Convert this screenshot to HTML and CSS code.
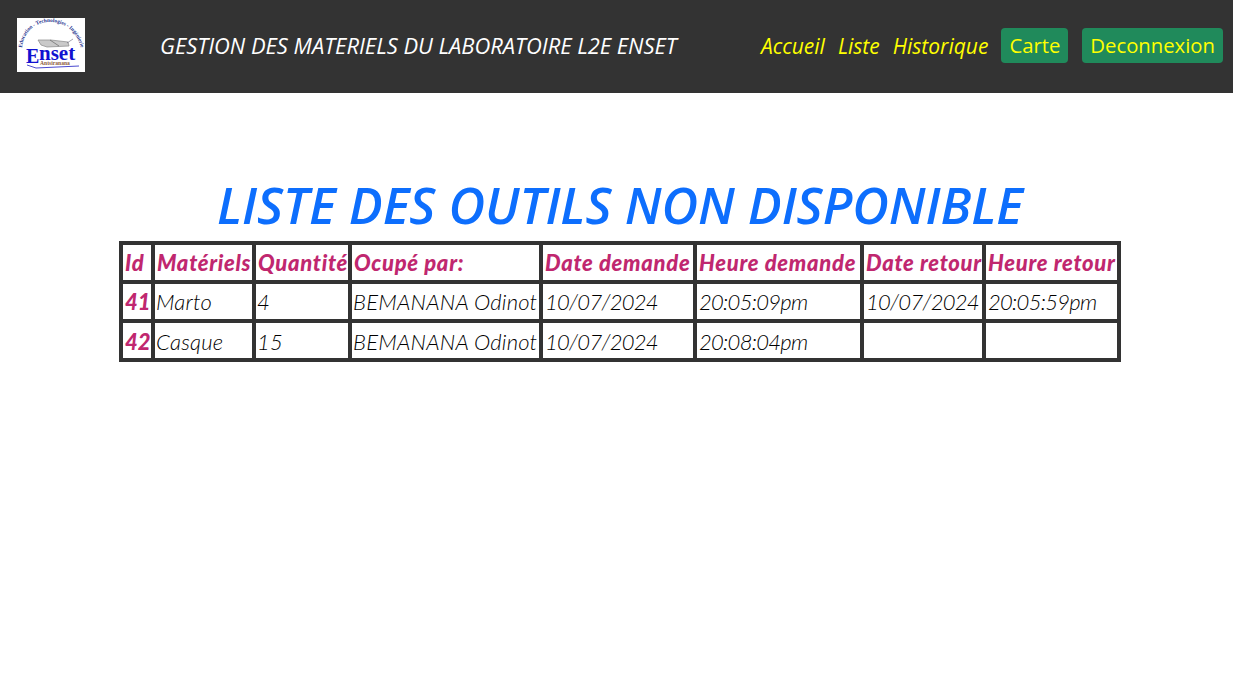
FILE: index.html
```html
<!DOCTYPE html>
<html lang="fr">
<head>
<meta charset="utf-8">
<title>Liste des outils non disponible</title>
<link rel="stylesheet" href="styles.css">
</head>
<body>
<header class="topbar">
  <div class="logo">
    <svg viewBox="0 0 68 54" width="68" height="54" role="img" aria-label="Enset">
      <rect width="68" height="54" fill="#fff"/>
      <defs><path id="arc" d="M5 30 C 7 12 20 4 33 4 C 47 4 60 13 64 30"/></defs>
      <text class="logo-arc"><textPath href="#arc" startOffset="50%" text-anchor="middle">Education - Technologies - Ingénierie</textPath></text>
      <path d="M21 22 L34 22 L51 24 L52 28 L30 29 L24 27 Z" fill="#c9c9c9" stroke="#888" stroke-width=".7"/>
      <path d="M33 22 L42 28" stroke="#666" stroke-width=".7"/>
      <path d="M50 25 L56 21" stroke="#667" stroke-width=".6"/>
      <text class="logo-e" x="9" y="45">E</text>
      <text class="logo-nset" x="22" y="42">nset</text>
      <text class="logo-sub" x="23" y="47">Antsiranana</text>
      <path d="M10 47 L19 50 L62 48" fill="none" stroke="#4a4ad0" stroke-width="1"/>
    </svg>
  </div>
  <div class="site-title">GESTION DES MATERIELS DU LABORATOIRE L2E ENSET</div>
  <nav class="nav">
    <a class="nav-link" href="#">Accueil</a>
    <a class="nav-link" href="#">Liste</a>
    <a class="nav-link" href="#">Historique</a>
    <a class="nav-btn" href="#">Carte</a>
    <a class="nav-btn" href="#">Deconnexion</a>
  </nav>
</header>
<main class="content">
  <h1 class="page-title">LISTE DES OUTILS NON DISPONIBLE</h1>
  <table class="data">
    <colgroup>
      <col class="c1"><col class="c2"><col class="c3"><col class="c4"><col class="c5"><col class="c6"><col class="c7"><col class="c8">
    </colgroup>
    <thead>
      <tr><th>Id</th><th>Matériels</th><th>Quantité</th><th>Ocupé par:</th><th>Date demande</th><th>Heure demande</th><th>Date retour</th><th>Heure retour</th></tr>
    </thead>
    <tbody>
      <tr><th>41</th><td>Marto</td><td>4</td><td>BEMANANA Odinot</td><td class="num">10/07/2024</td><td class="num">20:05:09pm</td><td class="num">10/07/2024</td><td class="num">20:05:59pm</td></tr>
      <tr><th>42</th><td>Casque</td><td>15</td><td>BEMANANA Odinot</td><td class="num">10/07/2024</td><td class="num">20:08:04pm</td><td></td><td></td></tr>
    </tbody>
  </table>
</main>
</body>
</html>
```
FILE: styles.css
```css
* { box-sizing: border-box; }
html, body { margin: 0; padding: 0; background: #fff; }
body { font-family: "Open Sans", "Noto Sans", sans-serif; color: #212529; }

.topbar {
  display: flex;
  align-items: center;
  height: 93px;
  background: #333;
  padding: 0 10px 2px 17px;
}
.logo { width: 68px; height: 54px; flex: none; margin-bottom: 2px; }
.logo svg { display: block; }
.logo-arc { font: bold 5.4px "Liberation Serif", serif; fill: #27358f; }
.logo-e { font: bold 20px "Liberation Serif", serif; fill: #1212d0; }
.logo-nset { font: bold 21px "Liberation Serif", serif; fill: #1212d0; }
.logo-sub { font: bold 5.6px "Liberation Serif", serif; fill: #8a5a3a; }

.site-title {
  margin-left: 75px;
  font-size: 21.9px;
  font-style: italic;
  color: #fff;
  white-space: nowrap;
}
.nav { margin-left: auto; display: flex; align-items: center; gap: 13px; }
.nav-link {
  font-size: 21px;
  font-style: italic;
  color: #ff0;
  text-decoration: none;
}
.nav-btn {
  display: block;
  height: 35px;
  line-height: 35px;
  padding: 0 8px;
  font-size: 20.3px;
  color: #ff0;
  background: #208a5b;
  border-radius: 4px;
  text-decoration: none;
}
.nav-btn + .nav-btn { margin-left: 1px; }

.content { padding: 86px 112px 0 119px; }
.page-title {
  margin: 0;
  height: 62px;
  line-height: 52px;
  text-align: center;
  font-size: 50.4px;
  font-style: italic;
  font-weight: 600;
  color: #0d6efd;
  white-space: nowrap;
}
.data {
  table-layout: fixed;
  width: 998px;
  border-collapse: collapse;
  border: 4px solid #333;
  font-family: Lato, sans-serif;
  font-size: 22px;
  font-style: italic;
}
.data th, .data td {
  border: 4px solid #333;
  height: 39px;
  padding: 0 0 0 2px;
  text-align: left;
  white-space: nowrap;
  overflow: hidden;
}
.data th { color: #c0276f; font-weight: 900; }
.data thead th { letter-spacing: 0.7px; }
.data td { font-weight: 300; color: #000; letter-spacing: 0.2px; padding-left: 1px; }
.data tbody tr:last-child th, .data tbody tr:last-child td { padding-top: 2px; }
.data .num { letter-spacing: -0.7px; padding-left: 2px; }
.c1 { width: 32px; } .c2 { width: 101px; } .c3 { width: 96px; } .c4 { width: 191px; }
.c5 { width: 154px; } .c6 { width: 167px; } .c7 { width: 122px; } .c8 { width: 135px; }
```
